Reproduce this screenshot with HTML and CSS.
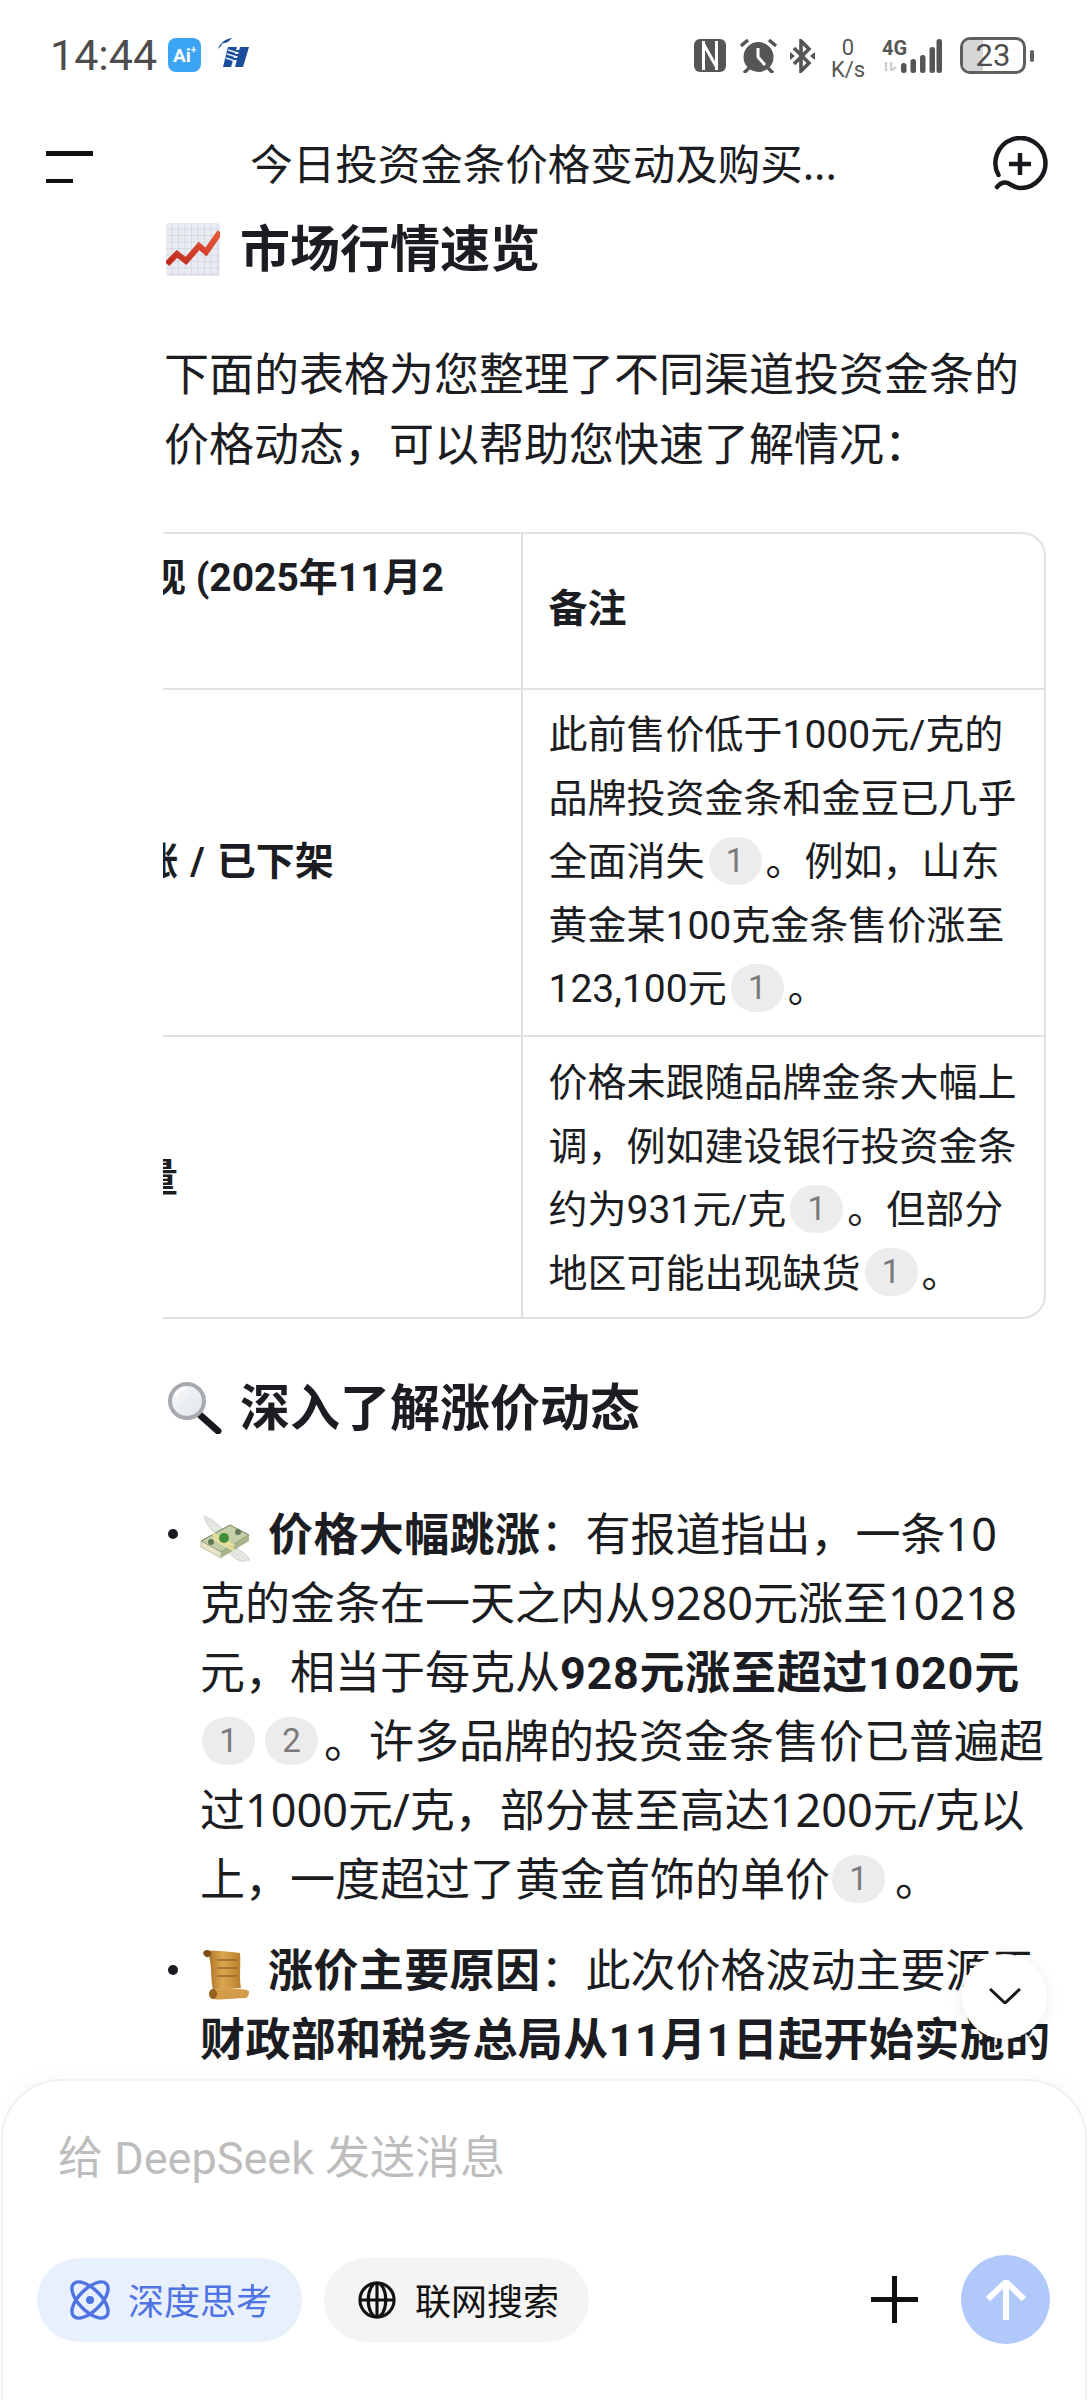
FILE: index.html
```html
<!DOCTYPE html>
<html lang="zh-CN">
<head>
<meta charset="utf-8">
<title>DeepSeek</title>
<link rel="stylesheet" href="styles.css">
</head>
<body>
<div class="app">
  <div class="status">
    <div class="status-left">
      <span class="time">14:44</span>
      <span class="ai-badge">Ai<i class="ai-plus">+</i></span>
      <svg class="hlogo" viewBox="0 0 31 29"><path d="M0 11 C2 5 7 1 14 0 L10 4 L3 6 L4 7 Z" fill="#1c4c9c"/><path d="M10 9 H19 L13 29 H5 Z" fill="#1c4c9c"/><path d="M22 9 H31 L25 29 H17 Z" fill="#1c4c9c"/><path d="M11 13 H24 M9.500 17 H23 M8.500 21 H21" stroke="#1c4c9c" stroke-width="1.800"/><path d="M10 12 L20 15 M9 16 L19 19 M8 20 L17 23" stroke="#e6edf7" stroke-width="1.400"/></svg>
    </div>
    <div class="status-right">
      <svg class="ic-nfc" viewBox="0 0 32 33"><rect width="32" height="33" rx="6" fill="#555"/><path d="M9.500 2 V31 M22.500 2 V31 M9.500 5 L22.500 28" stroke="#fff" stroke-width="3" fill="none"/></svg>
      <svg class="ic-alarm" viewBox="0 0 37 34"><circle cx="18.500" cy="18" r="15" fill="#555"/><path d="M18 9 V18 L25 26" stroke="#fff" stroke-width="3" fill="none"/><path d="M1 7 L8 1 M36 7 L29 1" stroke="#555" stroke-width="3.400"/><path d="M9 29 L4 34 M28 29 L33 34" stroke="#555" stroke-width="3.400"/></svg>
      <svg class="ic-bt" viewBox="0 0 25 34"><path d="M4 9 L19 24 L11 32 V2 L19 10 L4 25" stroke="#555" stroke-width="3.600" fill="none"/><path d="M0 13 L5 17 L0 21 Z M25 13 L20 17 L25 21 Z" fill="#555"/></svg>
      <div class="speed"><span>0</span><span>K/s</span></div>
      <div class="signal">
        <div class="net"><span class="net-g">4G</span>
          <svg class="net-arrows" viewBox="0 0 15 9"><path d="M4 0 V9 M9 0 V9 L14 5" stroke="#cfcfcf" stroke-width="2.400" fill="none"/></svg>
        </div>
        <svg class="bars" viewBox="0 0 41 34"><g fill="#555"><rect x="0" y="24" width="5.500" height="10" rx="2.500"/><rect x="9.500" y="20" width="5.500" height="14" rx="2.500"/><rect x="19" y="16" width="5.500" height="18" rx="2.500"/><rect x="28.500" y="8" width="5.500" height="26" rx="2.500"/></g><rect x="35.500" y="0" width="5.500" height="34" rx="2.500" fill="#555"/></svg>
      </div>
      <div class="battery"><div class="battery-body"><span class="battery-fill"></span><span class="battery-num">23</span></div><span class="battery-nub"></span></div>
    </div>
  </div>

  <header class="topbar">
    <div class="menu"><span class="menu-long"></span><span class="menu-short"></span></div>
    <div class="title">今日投资金条价格变动及购买...</div>
    <svg class="newchat" viewBox="0 0 56 56"><path d="M6.500 39 A25 25 0 1 1 28 52 C22 52 18 47 13.500 46.500 C10.500 46.300 7.500 48 5 51" fill="none" stroke="#17191d" stroke-width="4.500" stroke-linecap="round"/><path d="M17 28 H39 M28 17 V39" stroke="#17191d" stroke-width="4.500"/></svg>
  </header>

  <main class="chat">
    <h3 class="h-first">
      <svg class="emoji-chart" viewBox="0 0 54 53"><defs><pattern id="grid" width="6.500" height="6.500" patternUnits="userSpaceOnUse"><path d="M6.500 0 V6.500 H0" fill="none" stroke="#c3cad9" stroke-width="1"/></pattern><linearGradient id="red" x1="0" y1="1" x2="1" y2="0"><stop offset="0" stop-color="#bf2a1c"/><stop offset="1" stop-color="#e9573a"/></linearGradient></defs><rect width="54" height="53" rx="4" fill="#e9ebf1"/><rect width="54" height="53" rx="4" fill="url(#grid)"/><path d="M1 41 L11 31 L20 38 L33 23 L40 29 L54 9" fill="none" stroke="url(#red)" stroke-width="6"/></svg>
      <span>市场行情速览</span>
    </h3>
    <p class="intro">下面的表格为您整理了不同渠道投资金条的<br>价格动态，可以帮助您快速了解情况：</p>

    <div class="table-wrap">
      <table class="table">
        <thead>
          <tr><th>价格表现 (2025年11月2<br>日)</th><th>备注</th></tr>
        </thead>
        <tbody>
          <tr>
            <td class="cell-strong">大幅上涨 / 已下架</td>
            <td>此前售价低于1000元/克的<br>品牌投资金条和金豆已几乎<br>全面消失<span class="cite">1</span>。例如，山东<br>黄金某100克金条售价涨至<br>123,100元<span class="cite">1</span>。</td>
          </tr>
          <tr class="row-last">
            <td class="cell-strong">相对低量</td>
            <td>价格未跟随品牌金条大幅上<br>调，例如建设银行投资金条<br>约为931元/克<span class="cite">1</span>。但部分<br>地区可能出现缺货<span class="cite">1</span>。</td>
          </tr>
        </tbody>
      </table>
    </div>

    <h3 class="h-second">
      <svg class="emoji-glass" viewBox="0 0 55 52"><defs><linearGradient id="lens" x1="0" y1="0" x2="1" y2="1"><stop offset="0" stop-color="#fafbfc"/><stop offset="1" stop-color="#dfe4e8"/></linearGradient></defs><path d="M33 33 L51 49" stroke="#16181c" stroke-width="7" stroke-linecap="round"/><circle cx="20" cy="19" r="17" fill="url(#lens)" stroke="#a7abb0" stroke-width="4"/><path d="M8 15 A13 13 0 0 1 19 6" stroke="#fff" stroke-width="3" fill="none"/></svg>
      <span>深入了解涨价动态</span>
    </h3>

    <ul class="list">
      <li class="item">
        <span class="dot"></span>
        <div class="item-body">
          <svg class="emoji-money" viewBox="0 0 50 46"><path d="M14 16 C7 10 5 4 4 0 C8 2 10 3 11 3 C15 6 19 9 22 13 Z M31 30 C38 32 46 37 50 44 C46 44 44 46 41 45 C35 43 30 39 27 33 Z" fill="#e4e6e0" stroke="#c9ccc4" stroke-width="0.800"/><path d="M1 25 L30 9 L49 19 L21 36 Z" fill="#c3cfa8" stroke="#6f8058" stroke-width="1"/><path d="M1 25 L21 36 V42 L1 31 Z" fill="#e9e4c8" stroke="#9aa07e" stroke-width="0.600"/><path d="M21 36 L49 19 V25 L21 42 Z" fill="#a7b48c"/><path d="M13 18 L34 30 M13 22 L34 34" stroke="#eadf9c" stroke-width="3"/><circle cx="24" cy="22" r="5" fill="#3f8f3a"/><circle cx="38" cy="16" r="3" fill="#5f7a52"/><circle cx="11" cy="26" r="3" fill="#5f7a52"/></svg><strong>价格大幅跳涨</strong>：有报道指出，一条10<br>克的金条在一天之内从9280元涨至10218<br>元，相当于每克从<strong class="strong-wide">928元涨至超过1020元</strong><br><span class="cite cite-first">1</span><span class="cite">2</span>。许多品牌的投资金条售价已普遍超<br>过1000元/克，部分甚至高达1200元/克以<br>上，一度超过了黄金首饰的单价<span class="cite">1</span>。
        </div>
      </li>
      <li class="item">
        <span class="dot"></span>
        <div class="item-body">
          <svg class="emoji-scroll" viewBox="0 0 46 50"><defs><linearGradient id="paper" x1="0" y1="0" x2="1" y2="0"><stop offset="0" stop-color="#a86c20"/><stop offset="0.450" stop-color="#dba650"/><stop offset="1" stop-color="#b97f2c"/></linearGradient></defs><path d="M4 1 C10 0 30 2 37 3 C38 14 36 28 38 38 L10 40 C7 28 10 14 4 1 Z" fill="url(#paper)"/><path d="M14 10 H34 M15 18 H35 M14 26 H34" stroke="#96682a" stroke-width="1.600"/><path d="M0 3 C1 -1 7 -1 8 3 C8 8 2 9 0 3 Z" fill="#7d4f18"/><path d="M7 42 C12 38 40 38 46 41 C46 47 44 49 38 48 C28 49 14 50 10 49 C7 48 6 45 7 42 Z" fill="#d49b48"/><ellipse cx="10" cy="44" rx="4" ry="5" fill="#95621f"/></svg><strong>涨价主要原因</strong>：此次价格波动主要源于<br><strong>财政部和税务总局从11月1日起开始实施的</strong>
        </div>
      </li>
    </ul>
  </main>

  <footer class="composer">
    <button class="scroll-down" type="button" aria-label="scroll down"><svg viewBox="0 0 32 16"><path d="M1 1 L16 15 L31 1" fill="none" stroke="#17191d" stroke-width="3"/></svg></button>
    <div class="placeholder">给 DeepSeek 发送消息</div>
    <div class="tools">
      <div class="pill pill-on">
        <svg class="pill-icon" viewBox="0 0 38 38"><g fill="none" stroke="#4f73e3" stroke-width="3.400"><ellipse cx="19" cy="19" rx="23" ry="11" transform="rotate(45 19 19)"/><ellipse cx="19" cy="19" rx="23" ry="11" transform="rotate(-45 19 19)"/></g><circle cx="19" cy="19" r="4" fill="#4f73e3"/></svg>
        <span>深度思考</span>
      </div>
      <div class="pill">
        <svg class="pill-icon" viewBox="0 0 39 39"><g fill="none" stroke="#111" stroke-width="3.200"><circle cx="19.500" cy="19.500" r="17.500"/><ellipse cx="19.500" cy="19.500" rx="9" ry="17.500"/><path d="M19.500 2 V37 M2 19.500 H37"/></g></svg>
        <span>联网搜索</span>
      </div>
      <svg class="plus" viewBox="0 0 47 47"><path d="M0 23.500 H47 M23.500 0 V47" stroke="#111" stroke-width="5"/></svg>
      <div class="send"><svg viewBox="0 0 40 40"><path d="M20 40 V3 M2 19 L20 2 L38 19" fill="none" stroke="#fff" stroke-width="6" stroke-linejoin="round"/></svg></div>
    </div>
  </footer>
</div>
</body>
</html>
```
FILE: styles.css
```css
* { box-sizing: border-box; }
html, body { margin: 0; padding: 0; background: #fff; }
body { font-family: "Noto Sans", "Noto Sans CJK SC", sans-serif; color: #1b1d22; }
.app { width: 1088px; height: 2400px; display: flex; flex-direction: column; overflow: hidden; background: #fff; }

/* status bar */
.status { height: 112px; flex: none; padding: 37px 54px 0 50px; display: flex; justify-content: space-between; align-items: flex-start; color: #555; font-family: Roboto, sans-serif; }
.status-left { display: flex; align-items: center; height: 36px; }
.time { font-size: 43px; line-height: 36px; color: #4d4d4d; width: 118px; }
.ai-badge { width: 33px; height: 34px; border-radius: 8px; background: #3ba4f5; color: #fff; font-size: 19px; font-weight: 700; display: flex; align-items: center; justify-content: center; line-height: 1; margin-right: 17px; }
.ai-plus { font-style: normal; font-size: 10px; margin-top: -10px; }
.hlogo { width: 31px; height: 29px; margin-top: -6px; }
.status-right { display: flex; align-items: flex-start; }
.ic-nfc { width: 32px; height: 33px; margin: 2px 14px 0 0; }
.ic-alarm { width: 37px; height: 34px; margin: 2px 13px 0 0; }
.ic-bt { width: 25px; height: 34px; margin: 2px 16px 0 0; }
.speed { width: 34px; margin-right: 17px; display: flex; flex-direction: column; align-items: center; font-size: 22px; line-height: 22px; gap: 0; color: #555; }
.signal { display: flex; align-items: flex-start; width: 60px; margin-right: 18px; margin-top: 2px; }
.net { width: 19px; flex: none; display: flex; flex-direction: column; }
.net-g { font-size: 20px; font-weight: 700; line-height: 18px; white-space: nowrap; color: #555; }
.net-arrows { width: 15px; height: 9px; margin-top: 5px; }
.bars { width: 41px; height: 34px; flex: none; }
.battery { display: flex; align-items: center; height: 37px; gap: 4px; }
.battery-body { width: 66px; height: 37px; border: 3px solid #5f5f5f; border-radius: 10px; overflow: hidden; display: flex; align-items: center; justify-content: center; position: relative; }
.battery-fill { position: absolute; left: 0; top: 0; bottom: 0; width: 20px; background: #d6d6d6; }
.battery-num { position: relative; font-size: 31px; line-height: 31px; color: #4d4d4d; }
.battery-nub { width: 4px; height: 12px; border-radius: 2px; background: #5f5f5f; }

/* top bar */
.topbar { height: 110px; flex: none; padding: 0 40px 4px 46px; display: flex; align-items: center; justify-content: space-between; }
.menu { width: 47px; display: flex; flex-direction: column; gap: 23px; margin-top: 4px; }
.menu-long { height: 4.500px; width: 47px; background: #111; }
.menu-short { height: 4.500px; width: 27px; background: #111; }
.title { font-size: 42.500px; line-height: 56px; color: #1b1d22; white-space: nowrap; margin: -2px 0 0 2px; }
.newchat { width: 56px; height: 56px; margin-top: -2px; }

/* chat */
.chat { flex: 1; min-height: 0; overflow: hidden; padding: 1px 43px 0 164px; }
h3 { margin: 0; display: flex; align-items: center; font-size: 50px; line-height: 56px; font-weight: 700; color: #1b1d22; white-space: nowrap; }
.h-first { height: 56px; margin-top: -3px; }
.emoji-chart { width: 54px; height: 53px; margin: 3px 20px 0 2px; flex: none; }
.intro { margin: 63px 0 52.500px; font-size: 45px; line-height: 70px; white-space: nowrap; }

.table-wrap { width: 883px; margin-left: -1px; border: 2px solid #e1e1e1; border-left: 0; border-radius: 0 24px 24px 0; overflow: hidden; }
.table { width: 1050px; margin-left: -167px; border-collapse: collapse; table-layout: fixed; font-family: Roboto, "Noto Sans CJK SC", sans-serif; font-size: 39px; line-height: 63.500px; }
.table th, .table td { padding: 14px 20px 13.500px 26px; text-align: left; vertical-align: middle; border: 2px solid #e1e1e1; white-space: nowrap; font-weight: 400; }
.table th { font-weight: 700; padding-top: 13px; padding-bottom: 14.500px; }
.table th:first-child { padding-left: 32px; }
.table td:first-child { padding-left: 24px; word-spacing: 2.500px; }
.table .row-last td { padding-top: 15px; padding-bottom: 10.500px; }
.table .row-last td:first-child { padding-left: 24px; }
.table tr:first-child th { border-top: 0; }
.table tr:last-child td { border-bottom: 0; }
.table th:last-child, .table td:last-child { border-right: 0; }
.table td.cell-strong { font-weight: 700; }
.cite { display: inline-block; width: 53px; height: 48px; border-radius: 24px; background: #ececec; color: #7a7a7a; font-size: 33px; line-height: 48px; text-align: center; vertical-align: middle; font-weight: 400; font-family: Roboto, sans-serif; margin: -16px 4px -8px; }

.h-second { margin-top: 60.500px; }
.emoji-glass { width: 55px; height: 52px; margin: 2px 18px 0 3px; flex: none; }

.list { list-style: none; margin: 64px 0 0; padding: 0; display: flex; flex-direction: column; gap: 22px; }
.item { display: flex; font-size: 45px; line-height: 69px; white-space: nowrap; }
.dot { width: 10px; height: 10px; border-radius: 50%; background: #1b1d22; margin: 30px 22px 0 4px; flex: none; }
.item-body { flex: 1; }
strong { font-weight: 700; font-family: Roboto, "Noto Sans CJK SC", sans-serif; letter-spacing: 0.400px; line-height: 40px; }
.strong-wide { letter-spacing: 0.700px; }
.emoji-money { width: 50px; height: 46px; margin: -4px 18px -4px 0; vertical-align: middle; }
.emoji-scroll { width: 46px; height: 50px; margin: -4px 19px -4px 3px; vertical-align: middle; }
.list .cite { margin: -18px 10px -8px 2px; }
.list .cite-first { margin-right: 8px; }
.list .cite-first + .cite { margin: -18px 6px -8px 2px; }

/* composer */
.composer { position: relative; z-index: 2; height: 321px; flex: none; margin: 0 1px; background: #fff; border: 2px solid #f0f0f0; border-bottom: 0; border-radius: 60px 60px 0 0; box-shadow: 0 -8px 18px rgba(0, 0, 0, 0.018); padding: 48px 35px 0 34px; }
.scroll-down { position: absolute; right: 38px; bottom: calc(100% + 42px); width: 85px; height: 85px; padding: 0; border: 0; border-radius: 50%; background: #fff; box-shadow: 0 2px 16px rgba(0, 0, 0, 0.09); display: flex; align-items: center; justify-content: center; }
.scroll-down svg { width: 32px; height: 16px; margin-top: -2px; }
.placeholder { font-family: Roboto, "Noto Sans CJK SC", sans-serif; font-size: 45px; line-height: 60px; color: #bdbdbd; padding-left: 21px; height: 60px; white-space: nowrap; }
.tools { display: flex; align-items: center; margin-top: 66px; height: 89px; }
.pill { width: 265px; height: 84px; border-radius: 42px; background: #f4f4f4; color: #111; font-size: 36px; display: flex; align-items: center; padding-left: 34px; gap: 19px; margin-right: 22px; }
.pill-on { background: #e8f0fe; color: #4f73e3; }
.pill-icon { width: 38px; height: 38px; flex: none; overflow: visible; }
.plus { width: 47px; height: 47px; margin-left: auto; margin-right: 43px; }
.send { width: 89px; height: 89px; border-radius: 50%; background: #b1c8fb; display: flex; align-items: center; justify-content: center; }
.send svg { width: 40px; height: 40px; }
```
